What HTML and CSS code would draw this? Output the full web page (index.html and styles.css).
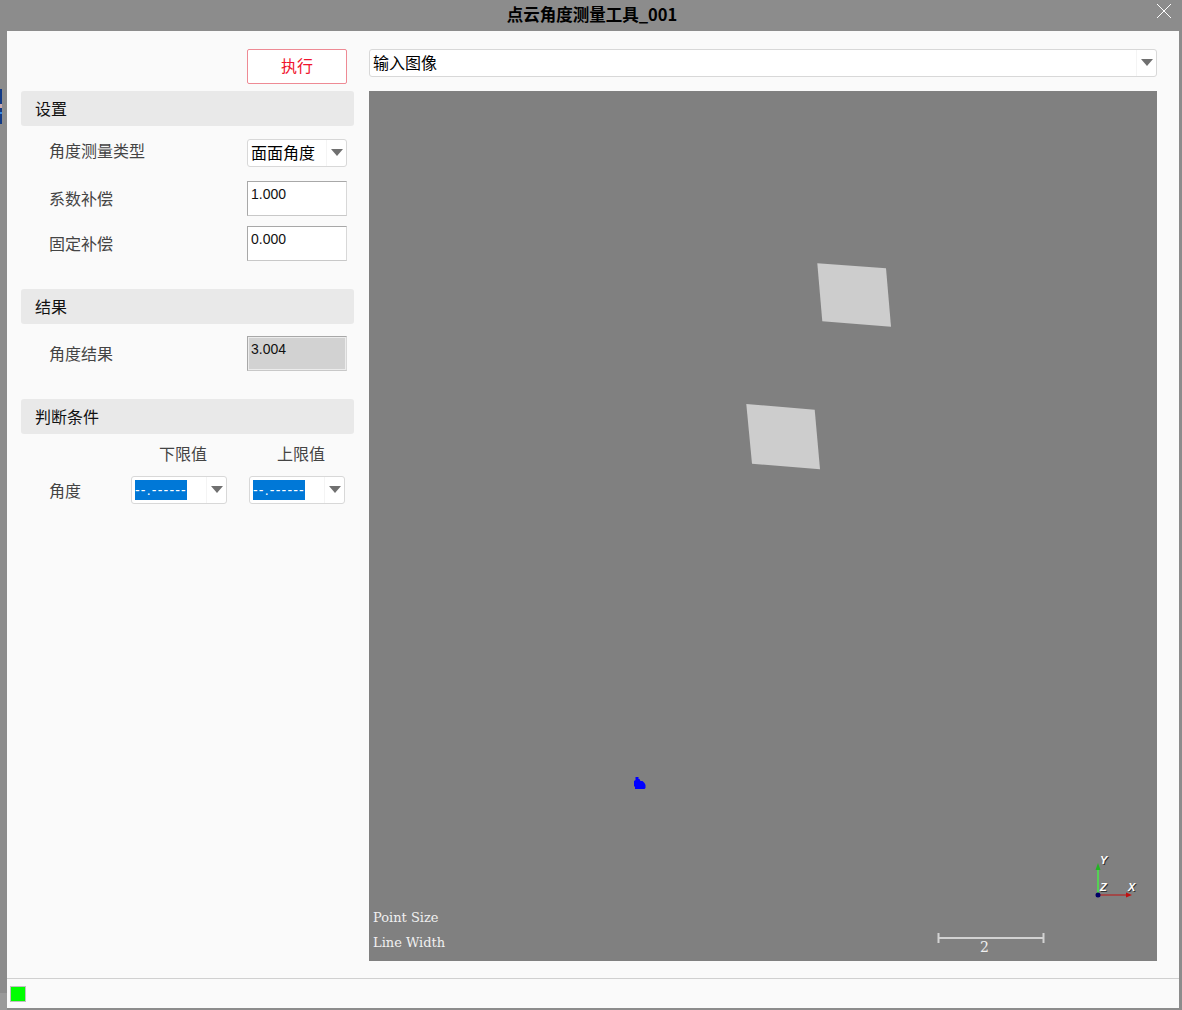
FILE: index.html
```html
<!DOCTYPE html>
<html lang="zh-CN">
<head>
    <meta charset="UTF-8">
    <meta name="viewport" content="width=device-width, initial-scale=1.0">
    <title>点云角度测量工具_001</title>
    <link rel="stylesheet" href="styles.css">
</head>
<body>
    <div class="window">
        <header class="titlebar">
            <span class="title">点云角度测量工具_001</span>
            <svg class="close" width="16" height="16" viewBox="0 0 16 16">
                <path d="M1 1L15 15M15 1L1 15" stroke="#fff" stroke-width="1" fill="none"/>
            </svg>
        </header>

        <div class="content">
            <aside class="panel">
                <div class="run-row">
                    <button class="run-btn">执行</button>
                </div>

                <div class="section-head">设置</div>
                <div class="row row-type">
                    <label>角度测量类型</label>
                    <div class="combo combo-type">
                        <span class="combo-text">面面角度</span>
                        <span class="combo-arrow"></span>
                    </div>
                </div>
                <div class="row row-coef">
                    <label>系数补偿</label>
                    <div class="field">1.000</div>
                </div>
                <div class="row row-fixed">
                    <label>固定补偿</label>
                    <div class="field">0.000</div>
                </div>

                <div class="section-head head-result">结果</div>
                <div class="row row-result">
                    <label>角度结果</label>
                    <div class="field field-off">3.004</div>
                </div>

                <div class="section-head head-limit">判断条件</div>
                <div class="limit-heads">
                    <span class="limit-low">下限值</span>
                    <span class="limit-high">上限值</span>
                </div>
                <div class="limit-row">
                    <label>角度</label>
                    <div class="combo combo-limit">
                        <span class="combo-sel">--.------</span>
                        <span class="combo-arrow"></span>
                    </div>
                    <div class="combo combo-limit">
                        <span class="combo-sel">--.------</span>
                        <span class="combo-arrow"></span>
                    </div>
                </div>
            </aside>

            <main class="view-col">
                <div class="combo combo-image">
                    <span class="combo-text">输入图像</span>
                    <span class="combo-arrow"></span>
                </div>
                <div class="viewport">
                    <!-- 3d scene, coordinates are relative to the viewport -->
                    <svg class="scene" width="788" height="870" viewBox="0 0 788 870">
                        <polygon points="448.3,172.3 517,177.3 522,235.7 453.3,230.3" fill="#cdcdcd"/>
                        <polygon points="377.3,313 445.7,318.7 451,378.3 383,372.7" fill="#cdcdcd"/>
                        <path d="M266.5 686h3v2h1l1 2h2l2 2 1 2v3l-1 1h-9.500v-2l-1-1v-5l1.500-1z" fill="#0000ff"/>

                        <path d="M729 804V776" stroke="#55d055" stroke-width="2"/>
                        <path d="M729 772l-2.500 7h5z" fill="#22b422"/>
                        <path d="M729 804H758" stroke="#c01010" stroke-width="1"/>
                        <path d="M763 804l-6-2.500v5z" fill="#c01010"/>
                        <circle cx="729" cy="804" r="2.500" fill="#000066"/>

                        <path d="M569 847H675M569.500 842V852M674.500 842V852" stroke="#d2d2d2" stroke-width="2" fill="none"/>
                    </svg>
                    <span class="axis-label axis-y">Y</span>
                    <span class="axis-label axis-z">Z</span>
                    <span class="axis-label axis-x">X</span>
                    <span class="scale-label">2</span>
                    <div class="overlay-text">
                        <div>Point Size</div>
                        <div>Line Width</div>
                    </div>
                </div>
            </main>
        </div>

        <footer class="statusbar">
            <span class="status-led"></span>
        </footer>
    </div>
    <div class="edge-mark"></div>
    <div class="edge-light"></div>
</body>
</html>
```

FILE: styles.css
```css
html, body {
    margin: 0;
    padding: 0;
}
body {
    width: 1182px;
    height: 1010px;
    overflow: hidden;
    background-color: #8c8c8c;
    font-family: "Microsoft YaHei", "Noto Sans CJK SC", "Liberation Sans", sans-serif;
    font-size: 16px;
    color: #444;
    position: relative;
}
.window {
    display: flex;
    flex-direction: column;
    height: 1008px;
    padding: 0 3px 0 7px;
}
.titlebar {
    height: 31px;
    flex: none;
    position: relative;
    text-align: center;
    padding-right: 2px;
}
.title {
    font-size: 16.5px;
    font-weight: bold;
    color: #000;
    line-height: 29px;
}
.close {
    position: absolute;
    right: 7px;
    top: 3px;
}
.content {
    flex: 1;
    display: flex;
    background-color: #fafafa;
}
.panel {
    width: 333px;
    margin-left: 14px;
    flex: none;
}
.run-row {
    display: flex;
    justify-content: flex-end;
    padding: 18px 7px 7px 0;
}
.run-btn {
    width: 100px;
    height: 35px;
    padding: 0 0 3px;
    background-color: #fff;
    border: 1px solid #ee8a94;
    border-radius: 2px;
    color: #f0142d;
    font-family: inherit;
    font-size: 16px;
}
.section-head {
    height: 35px;
    line-height: 34px;
    padding-left: 14px;
    background-color: #e9e9e9;
    border-radius: 3px;
    color: #111;
}
.head-result {
    margin-top: 28px;
}
.head-limit {
    margin-top: 28px;
}
.row {
    display: flex;
    justify-content: space-between;
    padding: 0 7px 0 28px;
}
.row label {
    line-height: 24px;
}
.row-type {
    margin-top: 13px;
}
.row-type label {
    margin-top: -1px;
}
.row-coef {
    margin-top: 14px;
}
.row-coef label {
    margin-top: 5px;
}
.row-fixed {
    margin-top: 10px;
}
.row-fixed label {
    margin-top: 5px;
}
.row-result {
    margin-top: 12px;
}
.row-result label {
    margin-top: 5px;
}
.field {
    box-sizing: border-box;
    width: 100px;
    height: 35px;
    padding: 2px 0 0 3px;
    background-color: #fff;
    border: 1px solid #a8a8a8;
    border-right-color: #d8d8d8;
    border-bottom-color: #c8c8c8;
    font-family: "Liberation Sans", sans-serif;
    font-size: 14px;
    line-height: 20px;
    color: #111;
}
.field-off {
    background-color: #d2d2d2;
    box-shadow: inset 0 0 0 1px #ececec;
}
.combo {
    box-sizing: border-box;
    display: flex;
    align-items: center;
    position: relative;
    height: 28px;
    background-color: #fff;
    border: 1px solid #d8d8d8;
    border-radius: 3px;
}
.combo-text {
    padding: 0 0 2px 3px;
    color: #000;
}
.combo-arrow {
    position: absolute;
    right: 0;
    top: 0;
    bottom: 0;
    width: 19px;
    border-left: 1px solid #f4f4f4;
}
.combo-arrow::after {
    content: "";
    position: absolute;
    left: 4px;
    top: 9px;
    border-left: 6.5px solid transparent;
    border-right: 6.5px solid transparent;
    border-top: 7px solid #707070;
}
.combo-type {
    width: 100px;
}
.limit-heads {
    position: relative;
    height: 42px;
}
.limit-low, .limit-high {
    position: absolute;
    top: 7px;
    line-height: 24px;
}
.limit-low {
    left: 138px;
}
.limit-high {
    left: 256px;
}
.limit-row {
    display: flex;
    align-items: center;
    padding-left: 28px;
}
.limit-row label {
    width: 82px;
    flex: none;
    line-height: 24px;
    margin-top: -1px;
}
.combo-limit {
    width: 96px;
    margin-right: 22px;
    flex: none;
}
.combo-sel {
    margin-left: 3px;
    width: 52px;
    height: 20px;
    line-height: 20px;
    background-color: #0078d7;
    color: #fff;
    font-family: "Liberation Sans", sans-serif;
    font-size: 14px;
    letter-spacing: 1.2px;
    white-space: nowrap;
    overflow: hidden;
}
.view-col {
    width: 788px;
    margin-left: 15px;
    padding-top: 18px;
    flex: none;
}
.combo-image {
    width: 788px;
}
.viewport {
    position: relative;
    width: 788px;
    height: 870px;
    margin-top: 14px;
    background-color: #808080;
}
.scene {
    display: block;
}
.overlay-text {
    position: absolute;
    left: 4px;
    top: 814px;
    font-family: "DejaVu Serif", "Liberation Serif", serif;
    font-size: 13px;
    line-height: 25px;
    color: #f0f0f0;
}
.axis-label {
    position: absolute;
    font-family: "Liberation Sans", sans-serif;
    font-size: 11px;
    font-style: italic;
    font-weight: bold;
    color: #fff;
    text-shadow: 1px 1px 0 #333;
}
.axis-y {
    left: 731px;
    top: 763px;
}
.axis-z {
    left: 731px;
    top: 790px;
}
.axis-x {
    left: 759px;
    top: 790px;
}
.scale-label {
    position: absolute;
    left: 611px;
    top: 848px;
    font-family: "DejaVu Serif", "Liberation Serif", serif;
    font-size: 14px;
    color: #f0f0f0;
}
.statusbar {
    flex: none;
    height: 30px;
    box-sizing: border-box;
    padding: 7px 0 0 3px;
    background-color: #fafafa;
    border-top: 1px solid #d0d0d0;
}
.status-led {
    display: block;
    width: 16px;
    height: 16px;
    background-color: #00ff00;
    border: 1px solid #c0c0c0;
    box-sizing: border-box;
}
.edge-mark {
    position: absolute;
    left: 0;
    top: 89px;
    width: 2px;
    height: 35px;
    background: linear-gradient(#123a86 0 15px, #c8a8b0 15px 19px, #123a86 19px 23px, #3a8ae0 23px 25px, #123a86 25px);
}
.edge-light {
    position: absolute;
    left: 0;
    top: 993px;
    width: 7px;
    height: 17px;
    background-color: #9a9a9a;
}
```
